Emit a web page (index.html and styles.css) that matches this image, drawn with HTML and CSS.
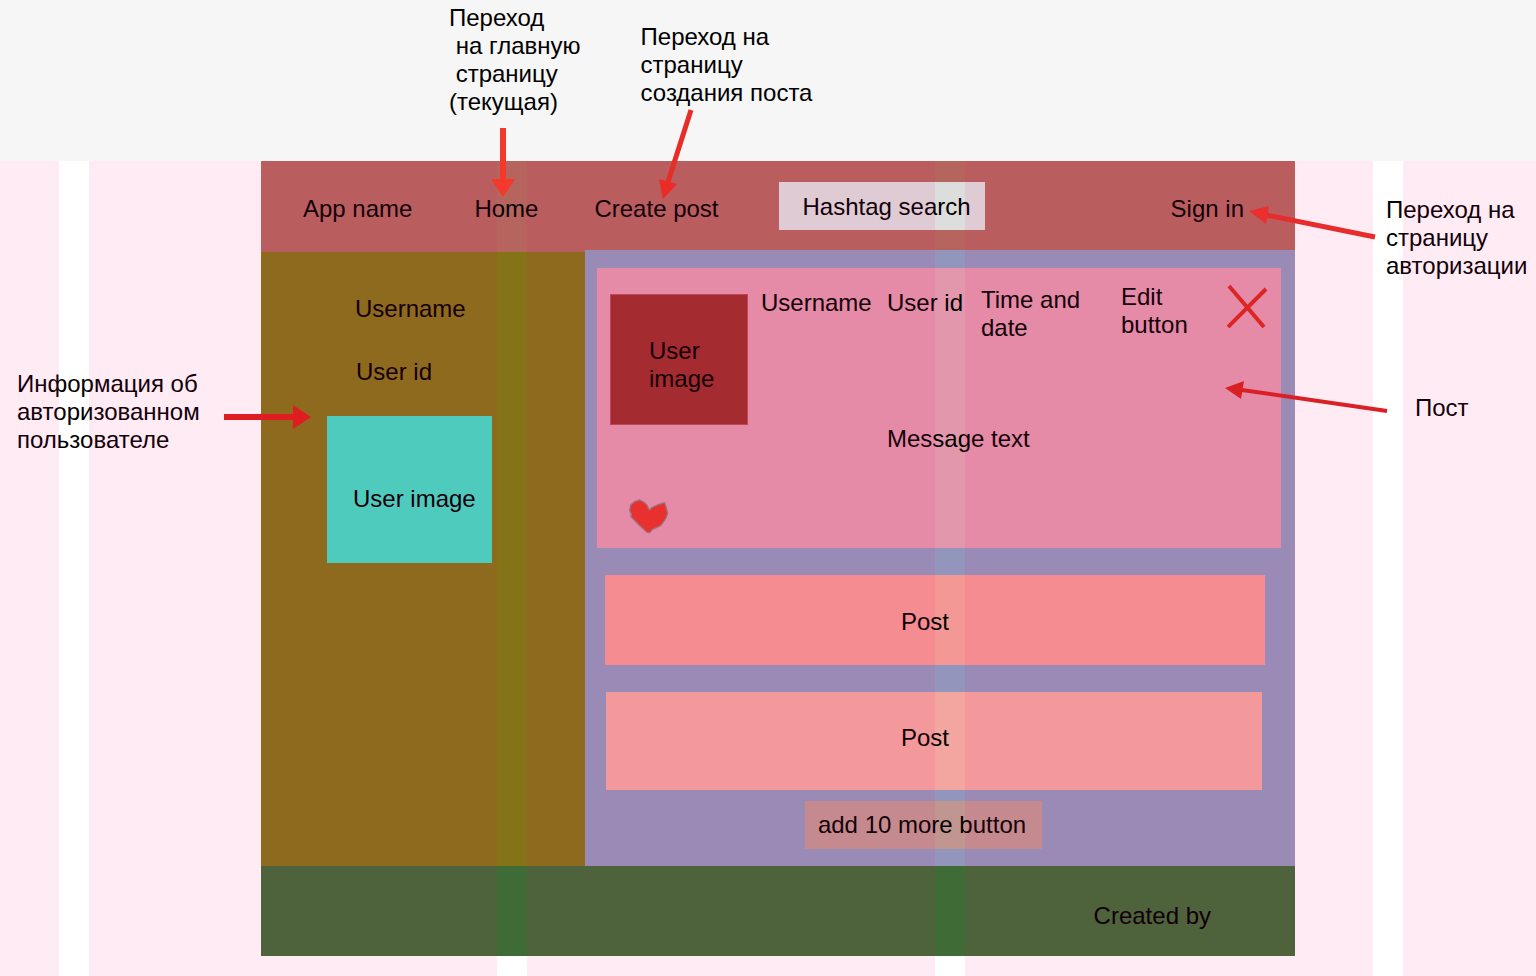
FILE: index.html
```html
<!DOCTYPE html>
<html lang="ru">
<head>
<meta charset="utf-8">
<title>App name – Home</title>
<link rel="stylesheet" href="styles.css">
</head>
<body>
<div class="top-notes">
  <p class="note note-home">Переход
 на главную
 страницу
(текущая)</p>
  <p class="note note-create">Переход на
страницу
создания поста</p>
</div>
<div class="board">
  <aside class="notes-left">
    <p class="note">Информация об
авторизованном
пользователе</p>
  </aside>
  <div class="app">
    <header class="header">
      <span class="app-name">App name</span>
      <nav class="nav">
        <a href="#home">Home</a>
        <a href="#create">Create post</a>
      </nav>
      <input class="search" type="text" aria-label="Hashtag search" placeholder="Hashtag search">
      <a class="sign-in" href="#signin">Sign in</a>
    </header>
    <div class="content">
      <aside class="sidebar">
        <p class="profile-name">Username</p>
        <p class="profile-id">User id</p>
        <div class="profile-image">User image</div>
      </aside>
      <main class="feed">
        <article class="post">
          <div class="avatar">User<br>image</div>
          <span class="post-user">Username</span>
          <span class="post-user">User id</span>
          <span class="post-time">Time and<br>date</span>
          <button class="edit" type="button">Edit<br>button</button>
          <button class="icon-button" type="button" aria-label="Delete">
            <svg width="41" height="44" viewBox="0 0 41 44"><path d="M2 2 37 43M1 43 39 5" stroke="#d9291f" stroke-width="4"/></svg>
          </button>
          <p class="message">Message text</p>
          <button class="icon-button like" type="button" aria-label="Like">
            <svg width="41" height="35" viewBox="39 27 123 105"><path d="M44 62 47 45 58 35 74 30 86 36 95 44 103 60 112 52 130 44 149 38 153 51 158 69 153 84 146 95 137 107 124 113 113 118 104 128 96 127 82 114 72 105 58 90 48 81 49 72Z" fill="#e7352a" stroke="#957c7c" stroke-width="4" stroke-linejoin="round"/></svg>
          </button>
        </article>
        <article class="post-short">Post</article>
        <article class="post-short post-last">Post</article>
        <button class="more" type="button">add 10 more button</button>
      </main>
    </div>
    <footer class="footer">Created by</footer>
  </div>
  <aside class="notes-right">
    <p class="note">Переход на
страницу
авторизации</p>
    <p class="note note-post">Пост</p>
  </aside>
  <div class="guides"><i></i><i></i><i></i><i></i><i></i></div>
</div>
<svg class="arrows" width="1536" height="500" viewBox="0 0 1536 500" aria-hidden="true">
  <path d="M500 128h6v51h9l-12 18-12-18h9z" fill="#f4382c"/>
  <path d="M691 110 667 185" stroke="#e62d28" stroke-width="5"/>
  <path d="M663 199 659 179 677 184Z" fill="#ec2b26"/>
  <path d="M1375 237 1266 215" stroke="#e72c2c" stroke-width="5"/>
  <path d="M1249 211 1269 206 1266 224Z" fill="#eb2e2e"/>
  <path d="M1387 411 1242 390" stroke="#d82025" stroke-width="4"/>
  <path d="M1225 388 1244 381 1241 399Z" fill="#d82025"/>
  <path d="M224 414h69v-9l18 12-18 12v-9h-69z" fill="#df1d20"/>
</svg>
</body>
</html>
```
FILE: styles.css
```css
* {
  box-sizing: border-box;
}

body {
  position: relative;
  margin: 0;
  min-height: 100vh;
  display: flex;
  flex-direction: column;
  background: #fff;
  color: #000;
  font: 24px/28px "Liberation Sans", Arial, sans-serif;
}

p {
  margin: 0;
}

a {
  color: inherit;
  text-decoration: none;
}

button,
input {
  margin: 0;
  padding: 0;
  border: 0;
  border-radius: 0;
  background: none;
  color: inherit;
  font: inherit;
}

.note {
  white-space: pre;
}

.top-notes {
  display: flex;
  align-items: flex-start;
  min-height: 161px;
  padding: 4px 0 0 449px;
  background: #f6f6f6;
}

.note-create {
  margin: 19px 0 0 60px;
}

.board {
  position: relative;
  flex: 1;
  display: grid;
  grid-template-columns: 261px minmax(0, 1fr) 241px;
  align-items: start;
  padding-bottom: 20px;
}

.notes-left {
  padding: 209px 0 0 17px;
}

.notes-right {
  padding: 35px 0 0 91px;
}

.note-post {
  margin: 114px 0 0 29px;
}

.header {
  display: flex;
  align-items: center;
  padding: 21px 51px 22px 42px;
  background: #b5655e;
}

.app-name,
.nav,
.sign-in {
  margin-top: 6px;
}

.nav {
  display: flex;
  gap: 56px;
  margin-left: 62px;
}

.search {
  width: 206px;
  height: 48px;
  margin-left: 60px;
  padding: 2px 0 0 24px;
  background: #dcdddd;
}

.search::placeholder {
  color: #000;
  opacity: 1;
}

.sign-in {
  margin-left: auto;
}

.content {
  display: grid;
  grid-template-columns: 324px minmax(0, 1fr);
}

.sidebar {
  padding: 43px 0 0 66px;
  background: #857318;
}

.profile-name {
  margin-left: 28px;
}

.profile-id {
  margin: 35px 0 30px 29px;
}

.profile-image {
  width: 165px;
  padding: 69px 0 50px 26px;
  background: #40ddc5;
}

.feed {
  margin-top: -2px;
  padding: 18px 14px 17px 12px;
  background: #9296bc;
}

.post {
  display: grid;
  grid-template-columns: 151px 126px 94px 140px 106px minmax(0, 1fr);
  align-items: start;
  padding: 15px 13px 14px;
  background: #e397ac;
}

.avatar {
  width: 138px;
  margin-top: 11px;
  padding: 42px 0 31px 38px;
  border: 1px solid #b84e57;
  background: #9d2f2a;
}

.post-user {
  margin-top: 6px;
}

.post-time {
  margin-top: 3px;
}

.edit {
  text-align: left;
}

.icon-button {
  justify-self: start;
  margin-top: 1px;
}

.icon-button svg {
  display: block;
}

.message {
  grid-column: 3 / -1;
}

.like {
  grid-column: 1;
  margin: 46px 0 0 18px;
}

.post-short {
  margin: 27px 16px 0 8px;
  padding: 33px 20px 29px 0;
  background: #f49895;
  text-align: center;
}

.post-last {
  margin: 27px 19px 0 9px;
  padding: 32px 18px 38px 0;
  background: #f2a69f;
}

.more {
  display: block;
  width: 237px;
  height: 48px;
  margin: 11px auto 0 208px;
  padding-right: 3px;
  background: #c19691;
}

.footer {
  padding: 36px 84px 26px;
  background: #3f6b37;
  text-align: right;
}

.guides {
  position: absolute;
  inset: 0;
  display: grid;
  grid-template-columns: minmax(0, 1fr) 408px 408px 408px 133px;
  gap: 30px;
  pointer-events: none;
}

.guides i {
  background: rgba(255, 0, 110, 0.08);
}

.arrows {
  position: absolute;
  top: 0;
  left: 0;
  pointer-events: none;
}
```
